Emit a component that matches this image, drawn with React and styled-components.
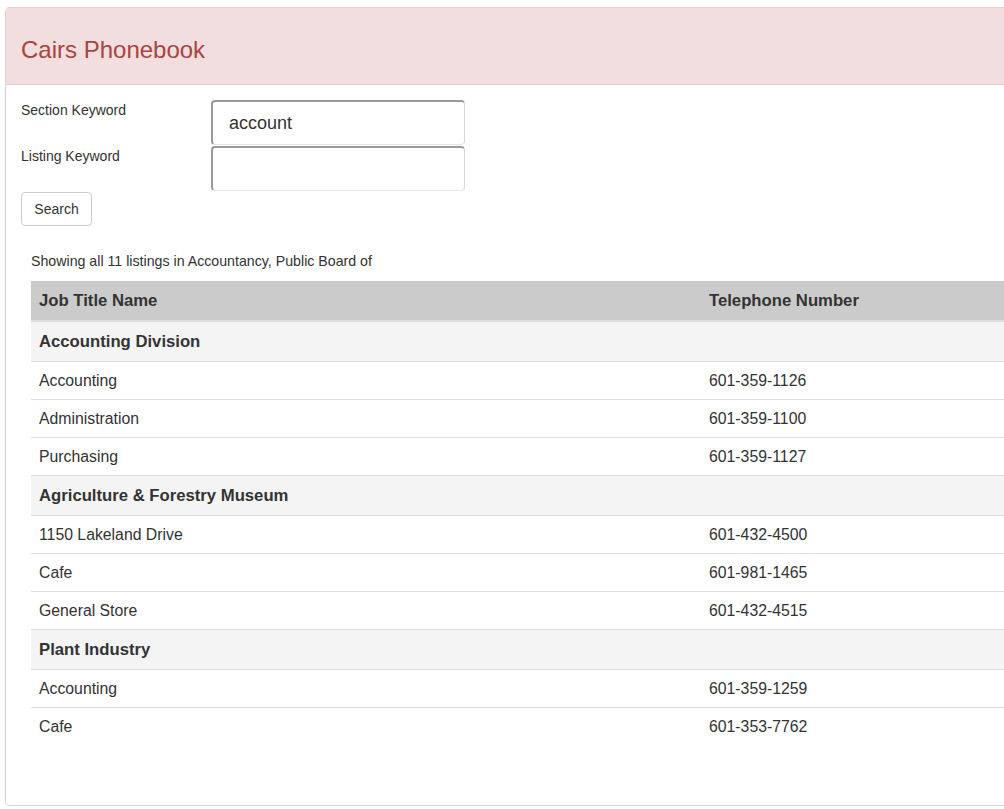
import styled, { createGlobalStyle } from "styled-components";

const GlobalStyle = createGlobalStyle`
  html, body {
    margin: 0;
    padding: 0;
    background: #fff;
    overflow: hidden;
  }
  body {
    font-family: "Liberation Sans", Arial, sans-serif;
    color: #333;
  }
`;

const sections = [
  {
    name: "Accounting Division",
    rows: [
      ["Accounting", "601-359-1126"],
      ["Administration", "601-359-1100"],
      ["Purchasing", "601-359-1127"],
    ],
  },
  {
    name: "Agriculture & Forestry Museum",
    rows: [
      ["1150 Lakeland Drive", "601-432-4500"],
      ["Cafe", "601-981-1465"],
      ["General Store", "601-432-4515"],
    ],
  },
  {
    name: "Plant Industry",
    rows: [
      ["Accounting", "601-359-1259"],
      ["Cafe", "601-353-7762"],
    ],
  },
];

const App = () => {
  return (
    <Page>
      <GlobalStyle />
      <Panel>
        <PanelHeading>
          <Title>Cairs Phonebook</Title>
        </PanelHeading>
        <PanelBody>
          <SearchForm>
            <FieldRow>
              <Label>Section Keyword</Label>
              <Input defaultValue="account" />
            </FieldRow>
            <FieldRow>
              <Label>Listing Keyword</Label>
              <Input defaultValue="" />
            </FieldRow>
            <Button type="button">Search</Button>
          </SearchForm>

          <Results>
            <Summary>Showing all 11 listings in Accountancy, Public Board of</Summary>
            <Table>
              <thead>
                <tr>
                  <HeadCell style={{ width: 670 }}>Job Title Name</HeadCell>
                  <HeadCell>Telephone Number</HeadCell>
                </tr>
              </thead>
              <tbody>
                {sections.map((section) => (
                  <Section key={section.name} section={section} />
                ))}
              </tbody>
            </Table>
          </Results>
        </PanelBody>
      </Panel>
    </Page>
  );
};

const Section = ({ section }) => (
  <>
    <SectionRow>
      <SectionCell colSpan={2}>{section.name}</SectionCell>
    </SectionRow>
    {section.rows.map(([title, phone], index) => (
      <tr key={index}>
        <Cell>{title}</Cell>
        <Cell>{phone}</Cell>
      </tr>
    ))}
  </>
);

// the panel is wider than the window, as in the screenshot; clip it here
const Page = styled.div`
  width: 100vw;
  height: 100vh;
  overflow: hidden;
  padding: 7px 0 0 5px;
  box-sizing: border-box;
`;

const Panel = styled.div`
  width: 1100px;
  height: 799px;
  box-sizing: border-box;
  border: 1px solid #ebccd1;
  border-radius: 4px;
  background: #fff;
`;

const PanelHeading = styled.div`
  height: 76px;
  display: flex;
  align-items: center;
  padding: 0 15px;
  background: #f2dede;
  border-bottom: 1px solid #ebccd1;
  border-radius: 3px 3px 0 0;
`;

const Title = styled.h3`
  margin: 0;
  padding-top: 8px;
  font-size: 24px;
  font-weight: 400;
  color: #a94442;
`;

const PanelBody = styled.div`
  padding: 15px 15px 0;
`;

const SearchForm = styled.form`
  display: flex;
  flex-direction: column;
  align-items: flex-start;
`;

const FieldRow = styled.div`
  display: flex;
  align-items: flex-start;
  margin-top: 1px;
  &:first-child {
    margin-top: 0;
  }
`;

const Label = styled.label`
  width: 190px;
  font-size: 14px;
  line-height: 18px;
  padding-top: 1px;
`;

const Input = styled.input`
  box-sizing: border-box;
  width: 254px;
  height: 45px;
  padding: 0 16px;
  font-family: "Liberation Sans", Arial, sans-serif;
  font-size: 18px;
  color: #333;
  border-radius: 4px;
  border-top: 2px solid #9a9a9a;
  border-left: 2px solid #9a9a9a;
  border-right: 1px solid #d6d6d6;
  border-bottom: 1px solid #e6e6e6;
  outline: none;
  background: #fff;
`;

const Button = styled.button`
  margin-top: 1px;
  box-sizing: border-box;
  width: 71px;
  height: 34px;
  font-family: "Liberation Sans", Arial, sans-serif;
  font-size: 14px;
  color: #333;
  background: #fff;
  border: 1px solid #ccc;
  border-radius: 4px;
  padding: 0;
`;

const Results = styled.div`
  margin-top: 26px;
  padding-left: 10px;
`;

const Summary = styled.p`
  margin: 0 0 11px;
  font-size: 14.2px;
  line-height: 18px;
`;

const Table = styled.table`
  width: 1100px;
  border-collapse: collapse;
  border-spacing: 0;
`;

const HeadCell = styled.th`
  box-sizing: border-box;
  height: 40px;
  padding: 0 8px;
  text-align: left;
  font-size: 16.7px;
  font-weight: 700;
  background: #cbcbcb;
  border-bottom: 2px solid #ddd;
`;

const SectionRow = styled.tr`
  background: #f4f4f4;
`;

const SectionCell = styled.td`
  height: 39px;
  padding: 0 8px;
  font-size: 16.7px;
  font-weight: 700;
  border-bottom: 1px solid #ddd;
`;

const Cell = styled.td`
  height: 37px;
  padding: 0 8px;
  font-size: 15.8px;
  border-bottom: 1px solid #ddd;
  tr:last-child > & {
    border-bottom: 0;
  }
`;

export default App;
